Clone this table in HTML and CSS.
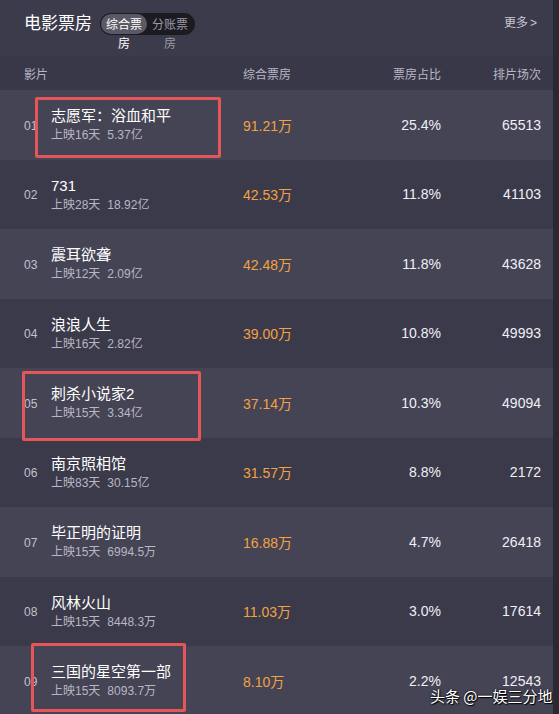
FILE: index.html
```html
<!DOCTYPE html>
<html lang="zh-CN">
<head>
<meta charset="utf-8">
<title>电影票房</title>
<link rel="stylesheet" href="styles.css">
</head>
<body>
<div class="page">
  <header class="top">
    <h1 class="title">电影票房</h1>
    <div class="toggle">
      <span class="tab active">综合票房</span>
      <span class="tab">分账票房</span>
    </div>
    <a class="more">更多<span class="chev">&gt;</span></a>
  </header>
  <div class="cols">
    <span class="c-film">影片</span>
    <span class="c-box">综合票房</span>
    <span class="c-pct">票房占比</span>
    <span class="c-cnt">排片场次</span>
  </div>
  <div class="list">
    <div class="row light"><span class="rank">01</span><div class="film"><div class="name">志愿军：浴血和平</div><div class="sub">上映16天<span class="gap">5.37亿</span></div></div><span class="box">91.21万</span><span class="pct">25.4%</span><span class="cnt">65513</span></div>
    <div class="row dark"><span class="rank">02</span><div class="film"><div class="name">731</div><div class="sub">上映28天<span class="gap">18.92亿</span></div></div><span class="box">42.53万</span><span class="pct">11.8%</span><span class="cnt">41103</span></div>
    <div class="row light"><span class="rank">03</span><div class="film"><div class="name">震耳欲聋</div><div class="sub">上映12天<span class="gap">2.09亿</span></div></div><span class="box">42.48万</span><span class="pct">11.8%</span><span class="cnt">43628</span></div>
    <div class="row dark"><span class="rank">04</span><div class="film"><div class="name">浪浪人生</div><div class="sub">上映16天<span class="gap">2.82亿</span></div></div><span class="box">39.00万</span><span class="pct">10.8%</span><span class="cnt">49993</span></div>
    <div class="row light"><span class="rank">05</span><div class="film"><div class="name">刺杀小说家2</div><div class="sub">上映15天<span class="gap">3.34亿</span></div></div><span class="box">37.14万</span><span class="pct">10.3%</span><span class="cnt">49094</span></div>
    <div class="row dark"><span class="rank">06</span><div class="film"><div class="name">南京照相馆</div><div class="sub">上映83天<span class="gap">30.15亿</span></div></div><span class="box">31.57万</span><span class="pct">8.8%</span><span class="cnt">2172</span></div>
    <div class="row light"><span class="rank">07</span><div class="film"><div class="name">毕正明的证明</div><div class="sub">上映15天<span class="gap">6994.5万</span></div></div><span class="box">16.88万</span><span class="pct">4.7%</span><span class="cnt">26418</span></div>
    <div class="row dark"><span class="rank">08</span><div class="film"><div class="name">风林火山</div><div class="sub">上映15天<span class="gap">8448.3万</span></div></div><span class="box">11.03万</span><span class="pct">3.0%</span><span class="cnt">17614</span></div>
    <div class="row light"><span class="rank">09</span><div class="film"><div class="name">三国的星空第一部</div><div class="sub">上映15天<span class="gap">8093.7万</span></div></div><span class="box">8.10万</span><span class="pct">2.2%</span><span class="cnt">12543</span></div>
  </div>
  <div class="mark m1"></div>
  <div class="mark m2"></div>
  <div class="mark m3"></div>
  <div class="watermark">头条 @一娱三分地</div>
</div>
</body>
</html>
```
FILE: styles.css
```css
html, body {
  margin: 0;
  padding: 0;
  background: #2a2933;
  overflow: hidden;
}
body {
  font-family: "Liberation Sans", "Noto Sans CJK SC", sans-serif;
  color: #fff;
}
.page {
  position: relative;
  width: 553px;
  height: 714px;
  background: #3a3948;
  overflow: hidden;
}
.top {
  height: 56px;
  display: flex;
  align-items: flex-start;
  padding: 0 16px 0 24px;
  background: #3c3b4b;
}
.title {
  margin: 11px 0 0;
  font-size: 17px;
  line-height: 22px;
  font-weight: normal;
  color: #fff;
  font-family: "Noto Sans CJK SC", sans-serif;
}
.toggle {
  margin: 13px 0 0 8px;
  display: flex;
  height: 22px;
  padding: 1px;
  box-sizing: border-box;
  background: #1c1b22;
  border-radius: 11px;
  width: 95px;
}
.tab {
  width: 46px;
  height: 20px;
  font-size: 12px;
  line-height: 19px;
  text-align: center;
  color: #9a99a6;
  border-radius: 10px;
  font-family: "Noto Sans CJK SC", sans-serif;
  padding: 0 4px;
  box-sizing: border-box;
  word-break: break-all;
}
.tab.active {
  background: #5a5966;
  color: #fff;
}
.more {
  margin: 14px 0 0 auto;
  font-size: 12px;
  line-height: 16px;
  color: #c8c7d2;
  font-family: "Noto Sans CJK SC", sans-serif;
}
.chev {
  margin-left: 2px;
  font-family: "Liberation Sans", sans-serif;
}
.cols {
  height: 34px;
  display: grid;
  grid-template-columns: 219px 120px 78px 100px;
  align-items: center;
  padding-left: 24px;
  font-size: 12px;
  color: #b8b7c4;
  font-family: "Noto Sans CJK SC", sans-serif;
  background: #393848;
}
.c-pct, .c-cnt { text-align: right; }
.list { display: flex; flex-direction: column; }
.row {
  height: 69.5px;
  display: grid;
  grid-template-columns: 27px 192px 120px 78px 100px;
  align-items: center;
  padding-left: 24px;
}
.row.light { background: #454455; }
.row.dark { background: #3b3a4a; }
.rank {
  font-size: 12px;
  color: #c2c1cc;
  padding-top: 2px;
}
.film { padding-top: 1px; }
.name {
  font-size: 15px;
  line-height: 20px;
  color: #fff;
}
.sub {
  font-size: 12px;
  line-height: 18px;
  color: #b8b7c3;
}
.gap { margin-left: 7px; }
.box {
  font-size: 14px;
  color: #f4a143;
}
.pct, .cnt {
  font-size: 14px;
  color: #f0eff5;
  text-align: right;
}
.mark {
  position: absolute;
  border: 3px solid #e6555a;
  border-radius: 2px;
  box-sizing: border-box;
}
.m1 { left: 35px; top: 97px; width: 186px; height: 61px; }
.m2 { left: 22px; top: 371px; width: 179px; height: 70px; }
.m3 { left: 31px; top: 643px; width: 155px; height: 69px; }
.watermark {
  position: absolute;
  left: 430px;
  top: 687px;
  font-size: 15px;
  line-height: 18px;
  color: #fff;
  white-space: nowrap;
  font-family: "Noto Sans CJK SC", sans-serif;
  text-shadow: 0 0 2px #000, 1px 1px 1px #000;
}
```
